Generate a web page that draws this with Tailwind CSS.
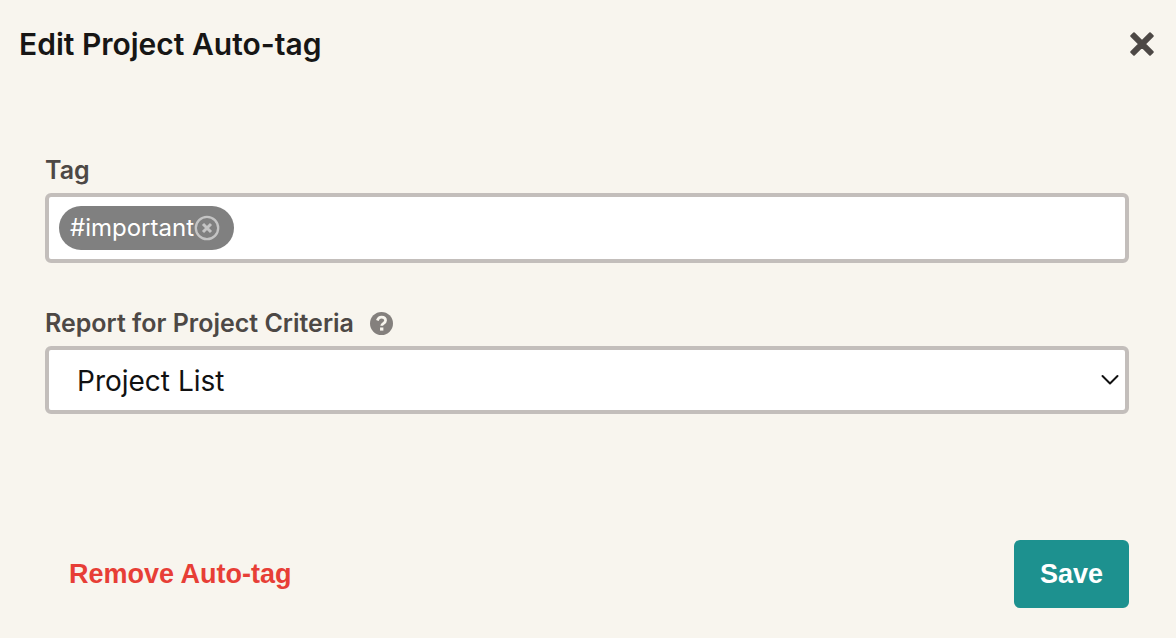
<!DOCTYPE html>
<html lang="en">
<head>
<meta charset="utf-8">
<meta name="viewport" content="width=device-width, initial-scale=1">
<title>Edit Project Auto-tag</title>
<script src="https://cdn.jsdelivr.net/npm/@tailwindcss/browser@4"></script>
</head>
<body class="min-h-screen bg-[#f8f5ee] font-['Inter','Liberation_Sans',sans-serif] text-[#4d4845]">
<form class="flex min-h-screen flex-col">
  <header class="flex items-center justify-between pt-6 pr-5 pl-[19px]">
    <h1 class="text-[30px] leading-10 font-semibold text-[#171615]">Edit Project Auto-tag</h1>
    <button type="button" aria-label="Close" class="flex size-7 items-center justify-center">
      <svg class="size-7" viewBox="0 0 28 28" fill="currentColor" stroke="currentColor" stroke-width="2" stroke-linejoin="round" aria-hidden="true"><path d="M6 3.200 14 11.200 22 3.200 24.800 6 16.800 14 24.800 22 22 24.800 14 16.800 6 24.800 3.200 22 11.200 14 3.200 6z"/></svg>
    </button>
  </header>

  <main class="flex flex-col pt-[90px] pr-[47px] pl-[45px]">
    <label for="tag" class="self-start text-[25px] leading-8 font-semibold">Tag</label>
    <div class="mt-[7px] flex h-[70px] items-center rounded-md border-4 border-[#c3bebb] bg-white pl-[10px]">
      <span class="flex h-11 items-center rounded-full bg-[#808080] pr-[14px] pl-[11px] text-2xl text-white">#important<button type="button" aria-label="Remove #important" class="flex">
        <svg class="size-[26px]" viewBox="0 0 26 26" fill="none" stroke="#c4c4c4" aria-hidden="true"><circle cx="13" cy="13" r="11.2" stroke-width="2.3"/><path d="M9 9l8 8M17 9l-8 8" stroke-width="3"/></svg>
      </button></span>
      <input id="tag" type="text" class="h-full min-w-0 flex-1 bg-transparent px-3 text-2xl outline-none">
    </div>

    <div class="mt-11 flex items-center gap-4">
      <label for="report" class="text-[25px] leading-8 font-semibold">Report for Project Criteria</label>
      <button type="button" aria-label="Help" class="flex">
        <svg class="size-[23px]" viewBox="0 0 22 22" fill="none" aria-hidden="true"><circle cx="11" cy="11" r="11" fill="#84807d"/><path d="M7 8.200C7.800 6 9.100 5 11 5c2.300 0 3.900 1.300 3.900 3.200 0 2.700-3.700 2.600-3.700 5" stroke="#f8f5ee" stroke-width="2.600"/><path d="M9.600 14.800h3.200v3H9.600z" fill="#f8f5ee"/></svg>
      </button>
    </div>
    <div class="relative mt-[7px]">
      <select id="report" class="h-[68px] w-full appearance-none rounded-md border-4 border-[#c3bebb] bg-white pt-0.5 pr-12 pl-7 text-[28px] text-[#111111]">
        <option>Project List</option>
      </select>
      <svg class="pointer-events-none absolute top-[28px] right-[10px] h-3 w-[18px]" viewBox="0 0 18 12" fill="none" stroke="#111111" stroke-width="2" stroke-linecap="round" stroke-linejoin="round" aria-hidden="true"><path d="M1.500 2 9 9.500 16.500 2"/></svg>
    </div>
  </main>

  <footer class="mt-auto flex items-center justify-between pr-[47px] pb-[30px] pl-[69px] font-['Liberation_Sans',sans-serif] text-[27px] font-bold">
    <button type="button" class="text-[#e73e36]">Remove Auto-tag</button>
    <button type="submit" class="h-[68px] rounded-md bg-[#1d918f] px-[26px] text-white">Save</button>
  </footer>
</form>
</body>
</html>
